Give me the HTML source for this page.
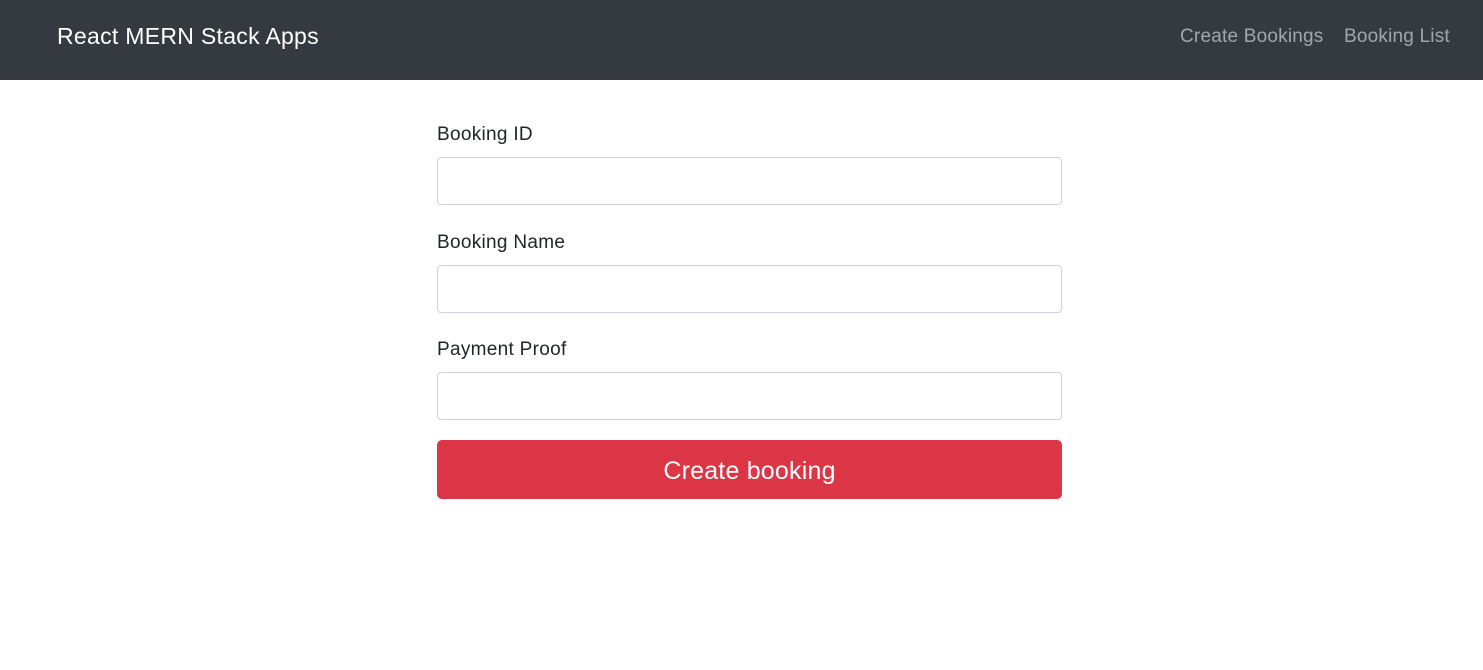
<!DOCTYPE html>
<html><head><meta charset="utf-8"><style>
*{box-sizing:border-box;margin:0;padding:0}
body{width:1483px;height:670px;background:#fff;font-family:"Liberation Sans",sans-serif;color:#212529;overflow:hidden;position:relative}
.nav{position:absolute;left:0;top:0;width:1483px;height:80px;background:#343a40}
.brand{position:absolute;left:57px;top:23px;font-size:23px;color:#fff;letter-spacing:0.3px}
.l{position:absolute;top:26px;font-size:19px;color:rgba(255,255,255,.55);letter-spacing:0.2px}
label{position:absolute;left:437px;font-size:19px;color:#212529;letter-spacing:0.3px}
.in{position:absolute;left:437px;width:625px;height:48px;border:1px solid #ced4da;border-radius:4px}
.btn{position:absolute;left:437px;top:440px;width:625px;height:59px;background:#dc3545;border-radius:5px;color:#fff;font-size:25px;text-align:center;line-height:63px;letter-spacing:0.2px}
</style></head><body>
<div class="nav"><div class="brand">React MERN Stack Apps</div><div class="l" style="left:1180px">Create Bookings</div><div class="l" style="left:1344px">Booking List</div></div>
<label style="top:124px">Booking ID</label><div class="in" style="top:157px"></div>
<label style="top:232px">Booking Name</label><div class="in" style="top:265px"></div>
<label style="top:339px">Payment Proof</label><div class="in" style="top:372px"></div>
<div class="btn">Create booking</div>
</body></html>
